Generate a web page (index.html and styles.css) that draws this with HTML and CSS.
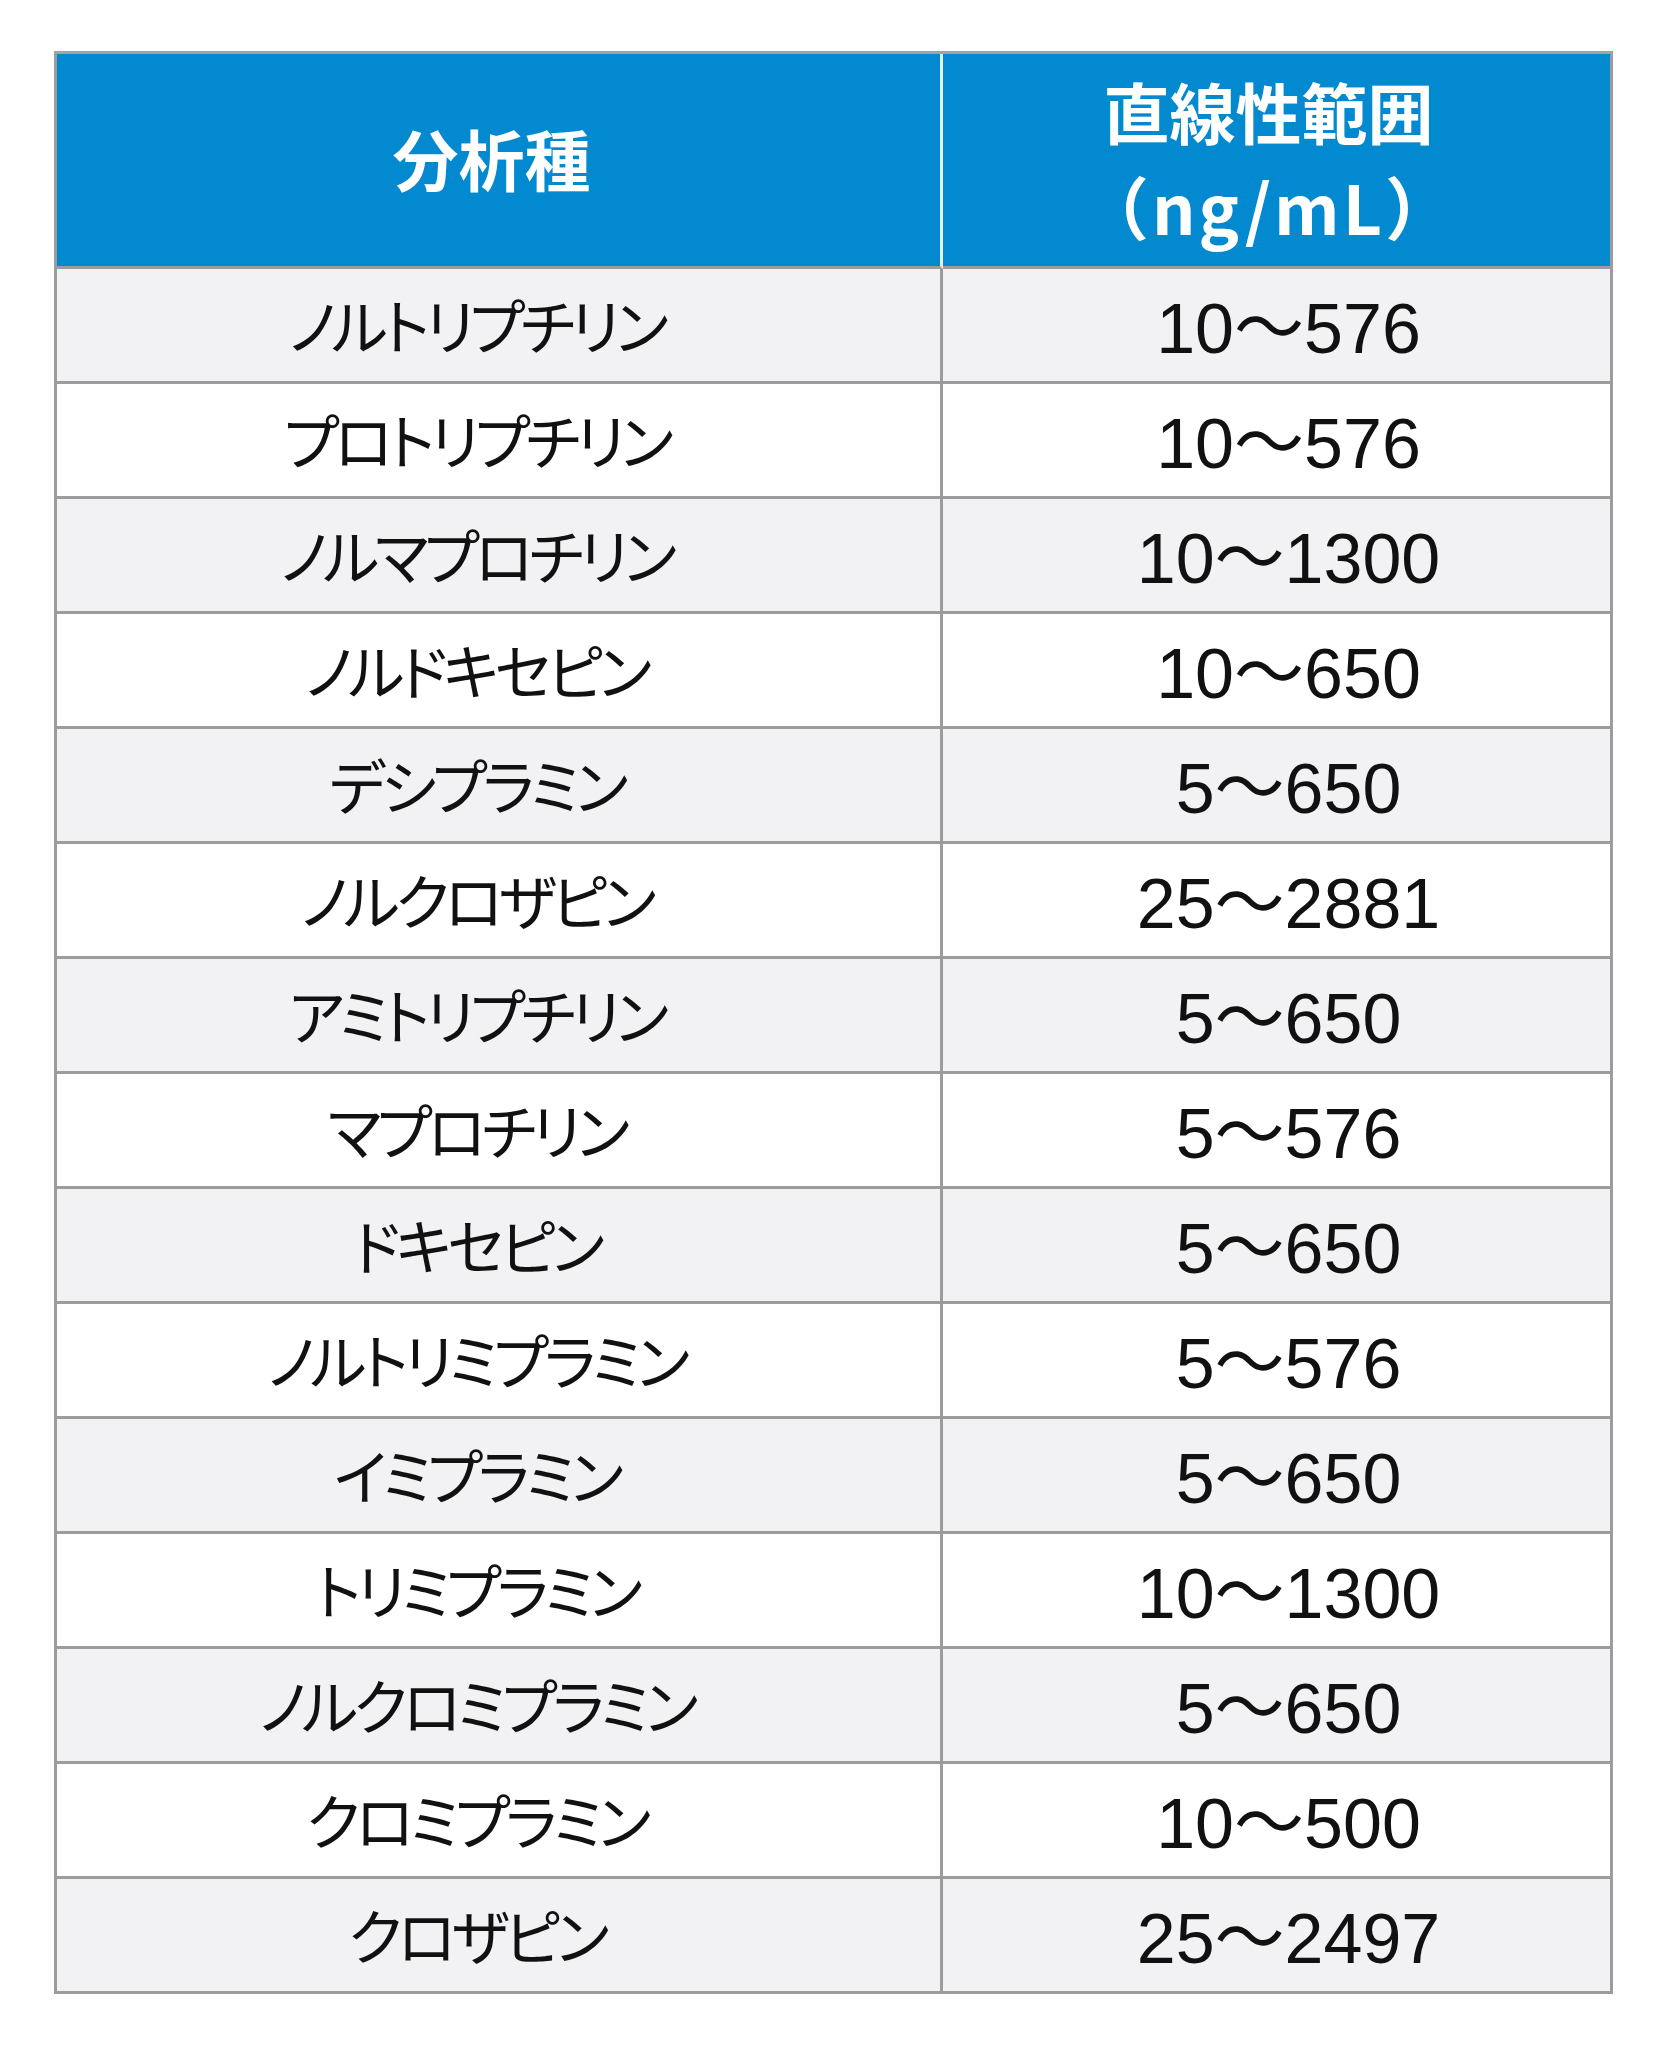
FILE: index.html
```html
<!DOCTYPE html>
<html lang="ja">
<head>
<meta charset="utf-8">
<title>分析種と直線性範囲</title>
<link rel="stylesheet" href="styles.css">
</head>
<body>
<div class="table">
  <div class="head head-name">分析種</div>
  <div class="head head-range"><span class="head-line">直線性範囲</span><span class="head-line unit">（ng/mL）</span></div>

  <div class="cell name odd">ノルトリプチリン</div><div class="cell range odd">10～576</div>
  <div class="cell name">プロトリプチリン</div><div class="cell range">10～576</div>
  <div class="cell name odd">ノルマプロチリン</div><div class="cell range odd">10～1300</div>
  <div class="cell name">ノルドキセピン</div><div class="cell range">10～650</div>
  <div class="cell name odd">デシプラミン</div><div class="cell range odd">5～650</div>
  <div class="cell name">ノルクロザピン</div><div class="cell range">25～2881</div>
  <div class="cell name odd">アミトリプチリン</div><div class="cell range odd">5～650</div>
  <div class="cell name">マプロチリン</div><div class="cell range">5～576</div>
  <div class="cell name odd">ドキセピン</div><div class="cell range odd">5～650</div>
  <div class="cell name">ノルトリミプラミン</div><div class="cell range">5～576</div>
  <div class="cell name odd">イミプラミン</div><div class="cell range odd">5～650</div>
  <div class="cell name">トリミプラミン</div><div class="cell range">10～1300</div>
  <div class="cell name odd">ノルクロミプラミン</div><div class="cell range odd">5～650</div>
  <div class="cell name">クロミプラミン</div><div class="cell range">10～500</div>
  <div class="cell name odd">クロザピン</div><div class="cell range odd">25～2497</div>
</div>
</body>
</html>
```

FILE: styles.css
```css
html, body {
  margin: 0;
  padding: 0;
  background: #ffffff;
}

body {
  padding: 51px 0 0 54px;
  font-family: "Noto Sans CJK JP", "Noto Sans", sans-serif;
}

.table {
  width: 1559px;
  box-sizing: border-box;
  display: grid;
  grid-template-columns: 886px 670px;
  border-top: 3px solid #a3a3a3;
  border-left: 3px solid #9c9c9c;
}

.head {
  box-sizing: border-box;
  height: 215px;
  background: #0289cf;
  color: #ffffff;
  font-weight: 700;
  font-size: 66px;
  line-height: 96px;
  display: flex;
  flex-direction: column;
  align-items: center;
  justify-content: center;
  text-align: center;
  border-bottom: 3px solid #9c9c9c;
}

.head-name {
  border-right: 3px solid #dff3ff;
  padding-right: 14px;
  padding-bottom: 6px;
}

.head-range {
  border-right: 3px solid #9c9c9c;
  padding-right: 16px;
  padding-bottom: 4px;
}

.head-line {
  display: block;
}

.unit {
  font-size: 68px;
  letter-spacing: 3px;
}

.cell {
  box-sizing: border-box;
  height: 115px;
  display: flex;
  align-items: center;
  justify-content: center;
  background: #ffffff;
  color: #111111;
  border-bottom: 3px solid #9c9c9c;
  border-right: 3px solid #9c9c9c;
  white-space: nowrap;
}

.cell.odd {
  background: #f2f2f4;
}

.name {
  font-family: "Noto Sans CJK JP", sans-serif;
  font-feature-settings: "palt" 1;
  font-size: 60px;
  letter-spacing: -4.5px;
  padding-right: 44px;
  padding-bottom: 4px;
}

.range {
  font-family: "Liberation Sans", "Noto Sans CJK JP", sans-serif;
  font-size: 70px;
  padding-left: 24px;
  padding-bottom: 6px;
}
```
